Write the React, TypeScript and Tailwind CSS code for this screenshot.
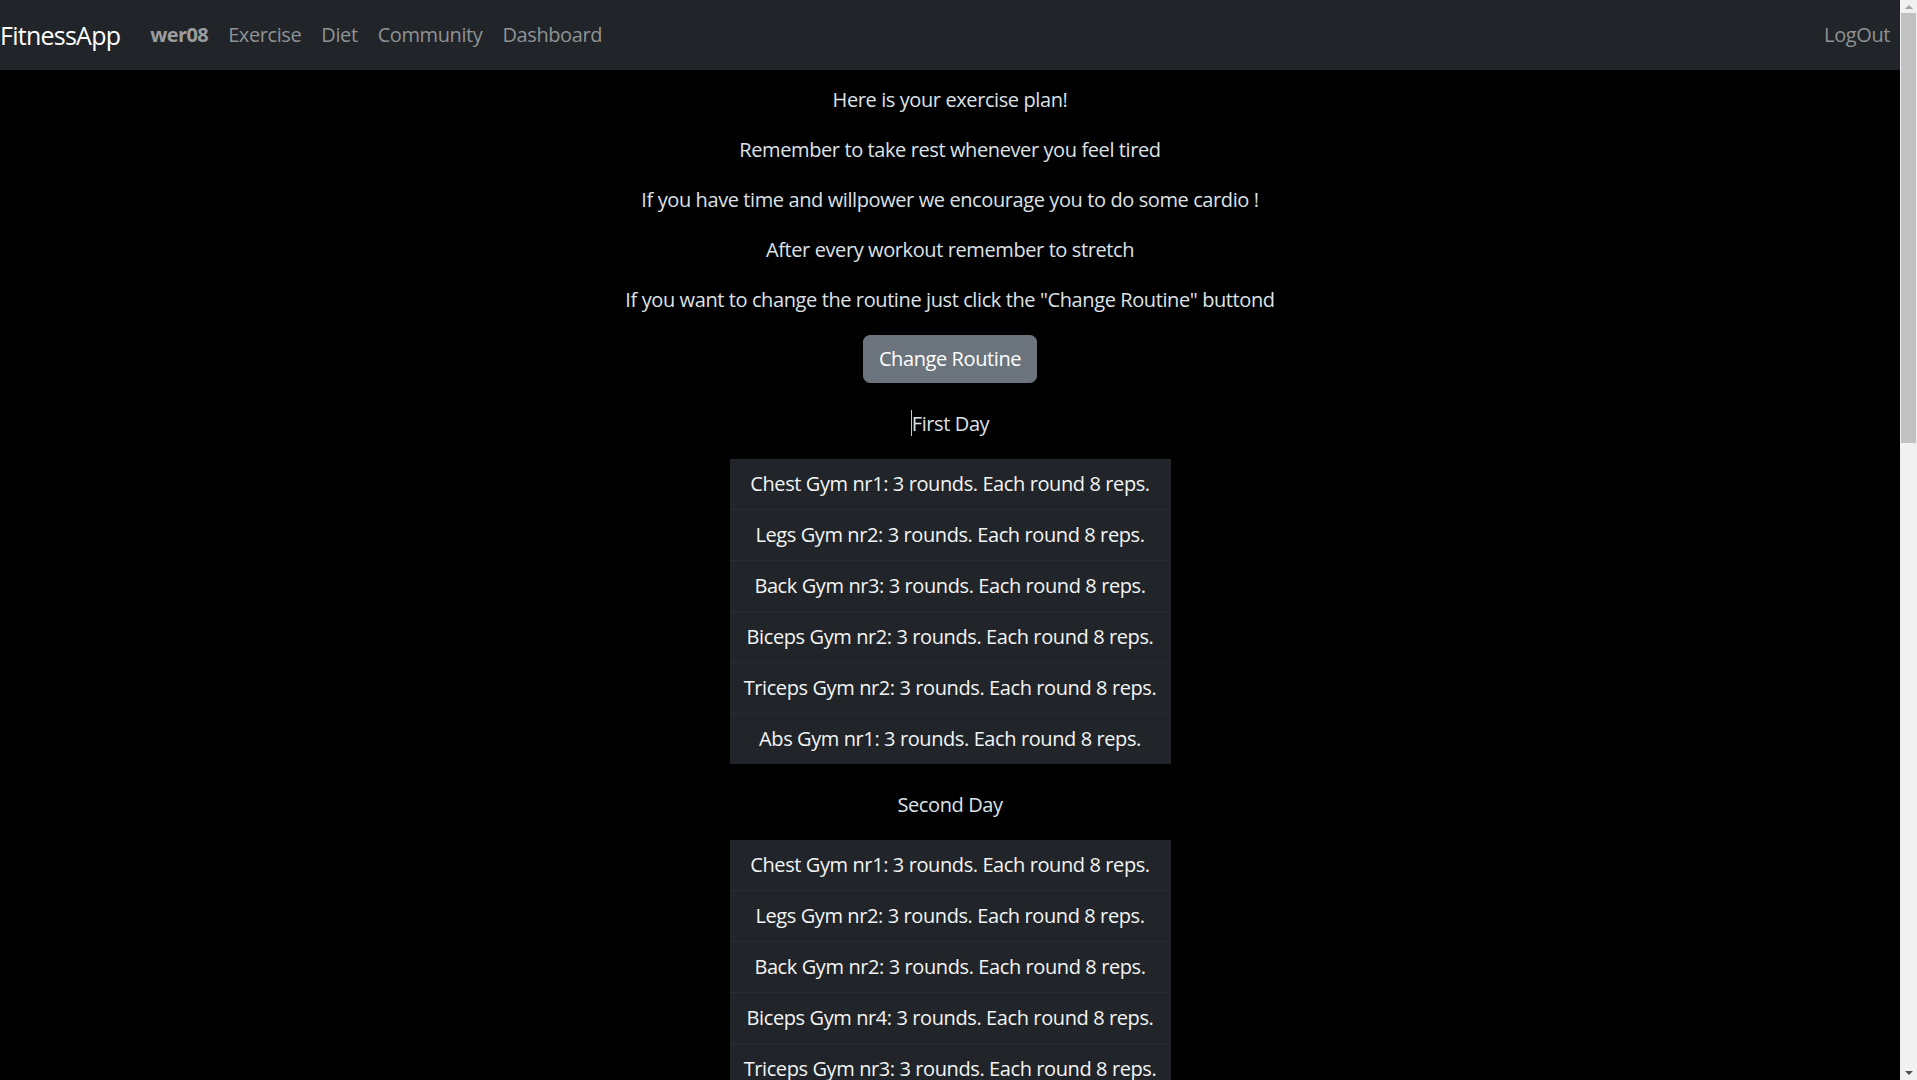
const day1 = [
  'Chest Gym nr1: 3 rounds. Each round 8 reps.',
  'Legs Gym nr2: 3 rounds. Each round 8 reps.',
  'Back Gym nr3: 3 rounds. Each round 8 reps.',
  'Biceps Gym nr2: 3 rounds. Each round 8 reps.',
  'Triceps Gym nr2: 3 rounds. Each round 8 reps.',
  'Abs Gym nr1: 3 rounds. Each round 8 reps.',
]

const day2 = [
  'Chest Gym nr1: 3 rounds. Each round 8 reps.',
  'Legs Gym nr2: 3 rounds. Each round 8 reps.',
  'Back Gym nr2: 3 rounds. Each round 8 reps.',
  'Biceps Gym nr4: 3 rounds. Each round 8 reps.',
  'Triceps Gym nr3: 3 rounds. Each round 8 reps.',
  'Abs Gym nr2: 3 rounds. Each round 8 reps.',
]

const intro = [
  'Here is your exercise plan!',
  'Remember to take rest whenever you feel tired',
  'If you have time and willpower we encourage you to do some cardio !',
  'After every workout remember to stretch',
  'If you want to change the routine just click the "Change Routine" buttond',
]

function Navbar() {
  return (
    <nav className="flex h-[70px] items-center justify-between bg-[#212529]">
      <div className="flex items-center">
        <a className="mr-5 text-[25px] leading-[38px] tracking-[-0.03em] text-white">FitnessApp</a>
        <a className="px-[10px] text-[20px] font-bold tracking-[-0.03em] text-[#9b9d9f]">wer08</a>
        <a className="px-[10px] text-[20px] text-[#8f9294]">Exercise</a>
        <a className="px-[10px] text-[20px] text-[#8f9294]">Diet</a>
        <a className="px-[10px] text-[20px] text-[#8f9294]">Community</a>
        <a className="px-[10px] text-[20px] text-[#8f9294]">Dashboard</a>
      </div>
      <a className="px-[10px] text-[20px] text-[#8f9294]">LogOut</a>
    </nav>
  )
}

function Scrollbar() {
  return (
    <div className="fixed right-0 top-0 flex h-screen w-[17px] flex-col items-center bg-[#f1f1f1]">
      <div className="mt-[5px] h-0 w-0 border-x-[4px] border-b-[4px] border-x-transparent border-b-[#a3a3a3]" />
      <div className="mt-[4px] h-[430px] w-[15px] bg-[#c1c1c1]" />
      <div className="flex-1" />
      <div className="mb-[5px] h-0 w-0 border-x-[4px] border-t-[4px] border-x-transparent border-t-[#505050]" />
    </div>
  )
}

function DayPlan({ title, items, caret }: { title: string; items: string[]; caret?: boolean }) {
  return (
    <section className="mt-[26px] flex flex-col items-center">
      <p className="mb-5 text-[#dee2e6]">
        {caret && <span className="inline-block h-[26px] w-px align-[-5px] bg-[#c8c8c8]" />}
        {title}
      </p>
      <ul className="w-[441px] bg-[#212529]">
        {items.map((item, i) => (
          <li
            key={i}
            className="whitespace-nowrap border-t border-white/[0.04] py-[10px] text-center text-[#f3f4f5] first:border-t-0"
          >
            {item}
          </li>
        ))}
      </ul>
    </section>
  )
}

export default function App() {
  return (
    <div className="min-h-screen bg-black pr-[17px] font-['Segoe_UI','Open_Sans',sans-serif] text-[20px] leading-[30px] tracking-[-0.02em]">
      <Navbar />
      <main className="flex flex-col items-center pt-[15px] pb-10">
        {intro.map((line) => (
          <p key={line} className="mb-5 text-center text-[#dee2e6]">
            {line}
          </p>
        ))}
        <button className="h-[48px] rounded-[7px] border border-[#6c757d] bg-[#6c757d] px-[15px] text-white">
          Change Routine
        </button>
        <DayPlan title="First Day" items={day1} caret />
        <DayPlan title="Second Day" items={day2} />
      </main>
      <Scrollbar />
    </div>
  )
}
